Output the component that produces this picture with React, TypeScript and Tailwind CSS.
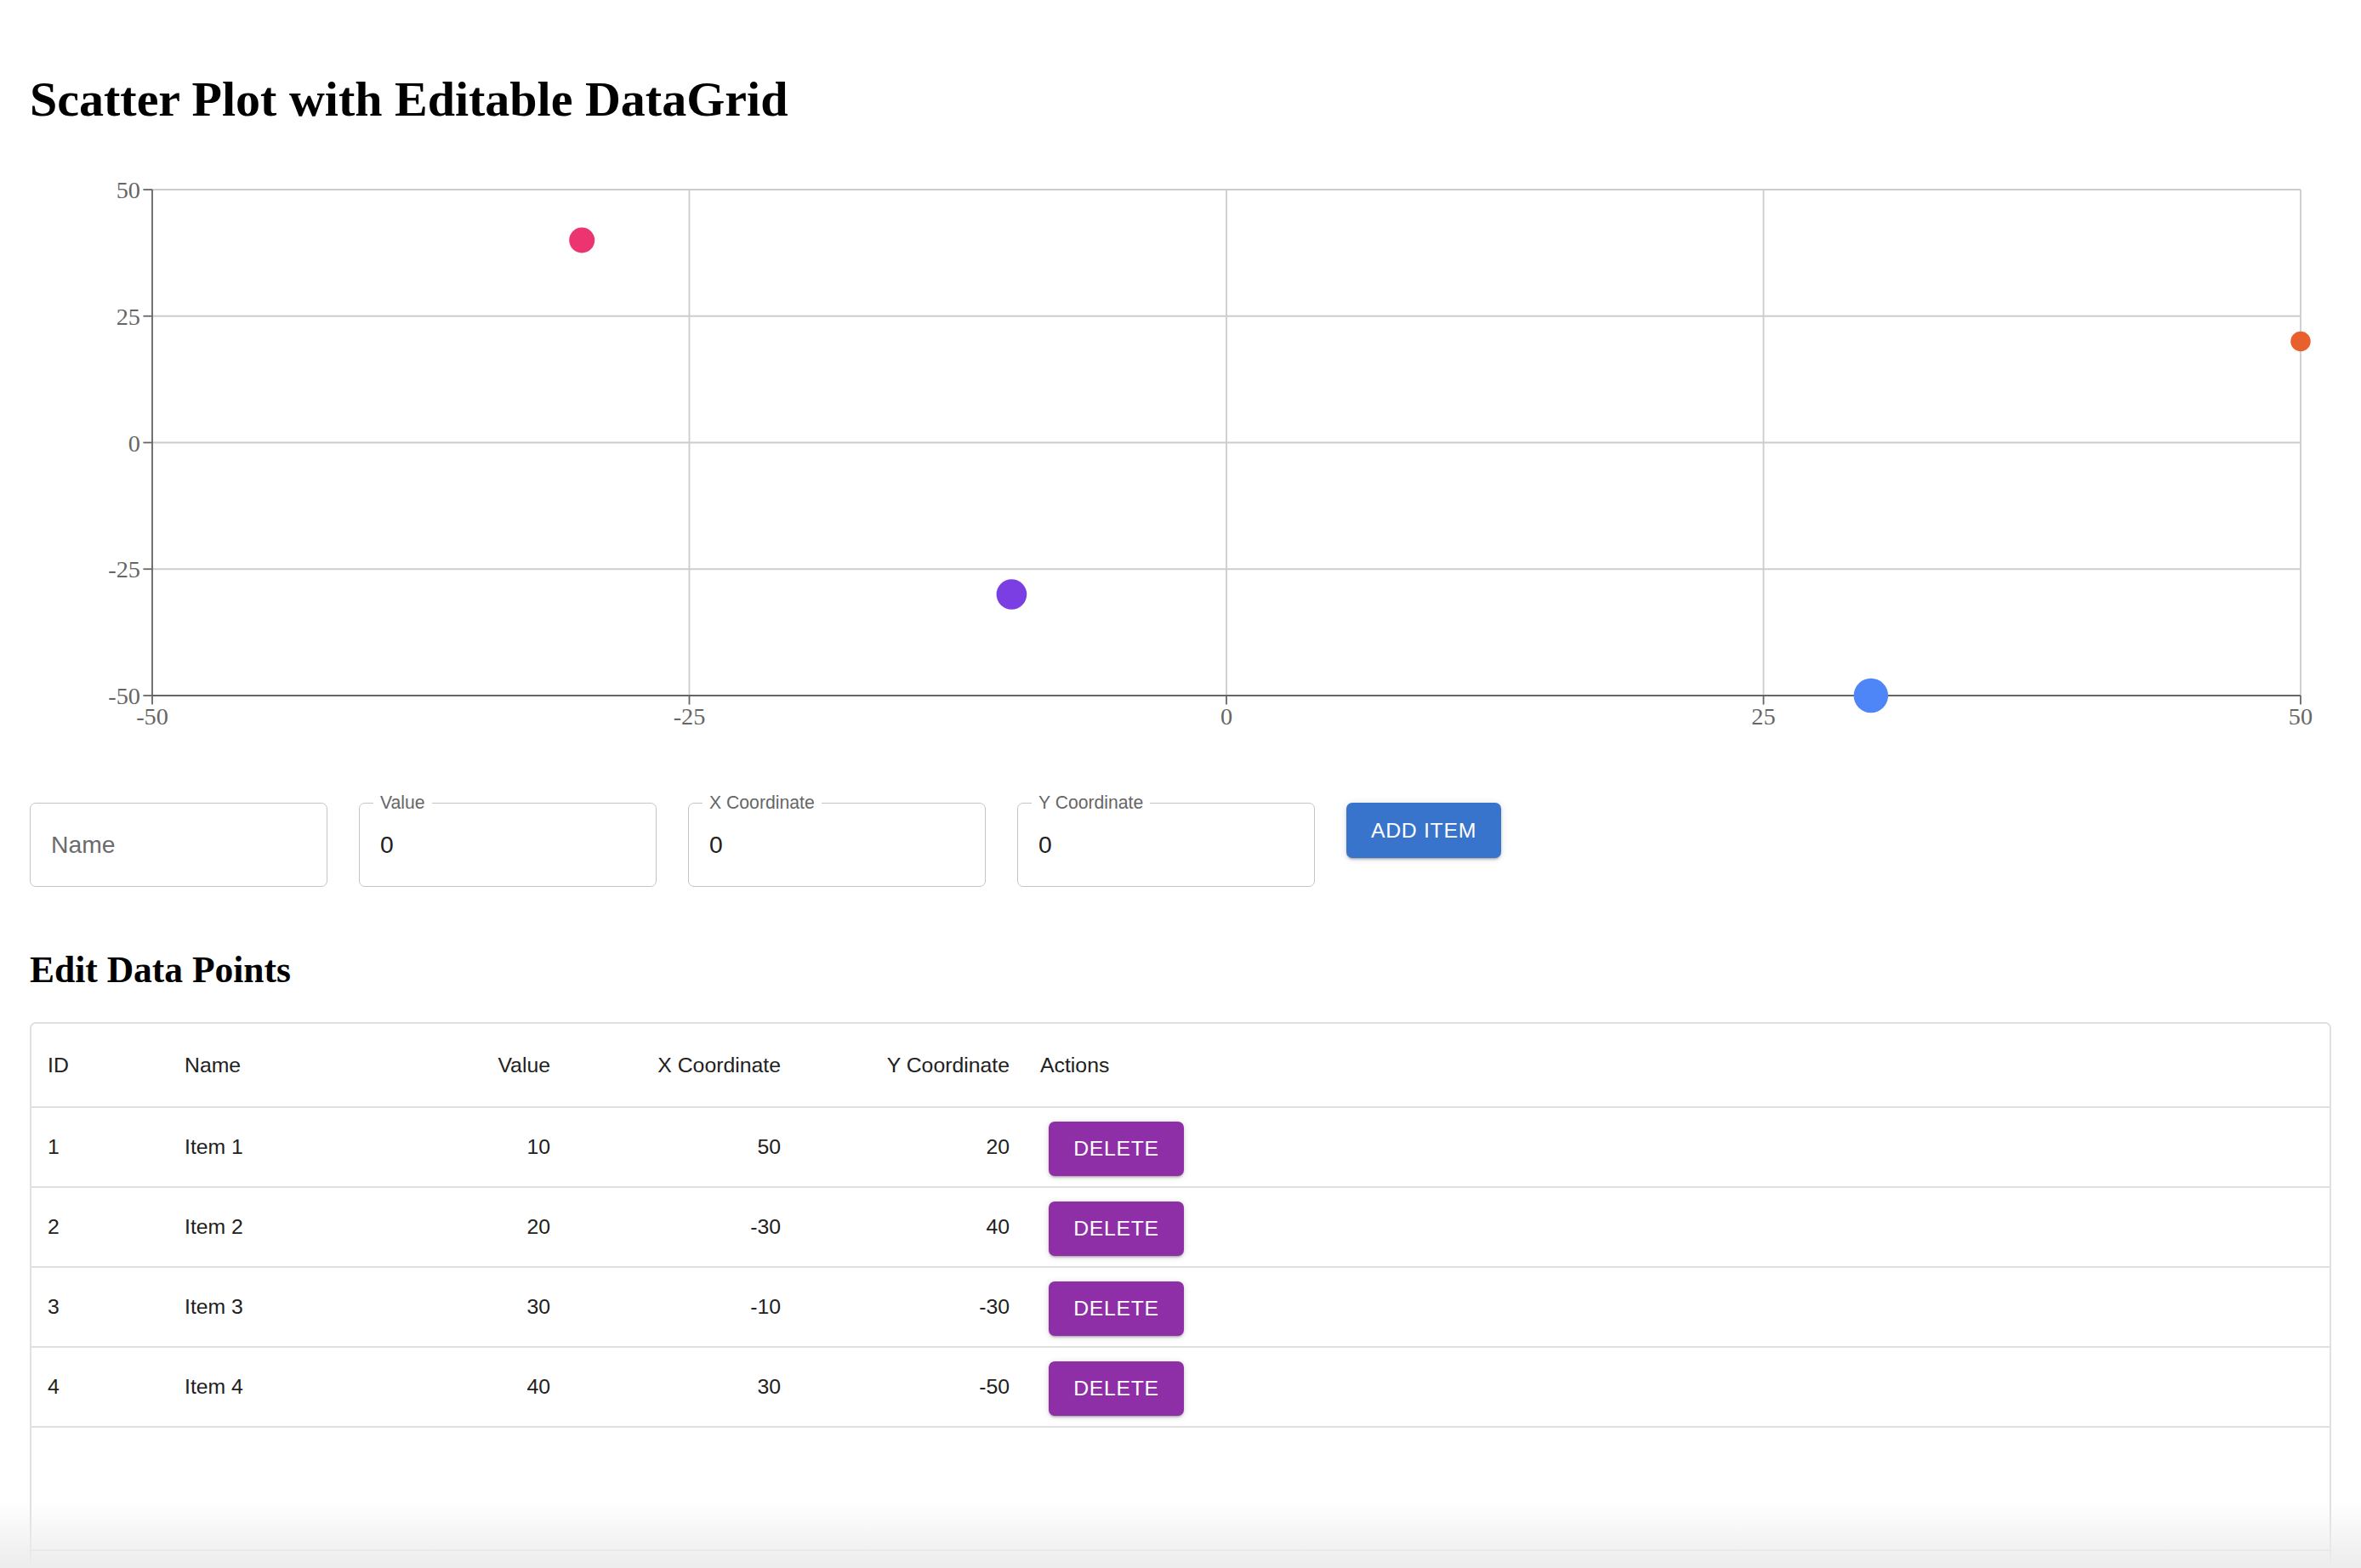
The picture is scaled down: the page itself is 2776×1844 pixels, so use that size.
import React from 'react';

type Point = { id: number; name: string; value: number; x: number; y: number; color: string; d: number };

const points: Point[] = [
  { id: 1, name: 'Item 1', value: 10, x: 50, y: 20, color: '#e8612c', d: 23.5 },
  { id: 2, name: 'Item 2', value: 20, x: -30, y: 40, color: '#ec3470', d: 30 },
  { id: 3, name: 'Item 3', value: 30, x: -10, y: -30, color: '#7a3ee3', d: 35.7 },
  { id: 4, name: 'Item 4', value: 40, x: 30, y: -50, color: '#4f86f7', d: 40.5 },
];

const ticks = [-50, -25, 0, 25, 50];

// plot box inside the svg (svg starts at page x=35, y=188)
const L = 144, R = 2670, T = 35, B = 630;
const sx = (v: number) => L + ((v + 50) / 100) * (R - L);
const sy = (v: number) => T + ((50 - v) / 100) * (B - T);

function Chart() {
  return (
    <svg width="2706" height="680" className="block mt-[39px]">
      {ticks.map(t => (
        <line key={'h' + t} x1={L} x2={R} y1={sy(t)} y2={sy(t)} stroke="#cccccc" strokeWidth={1.8} />
      ))}
      {ticks.map(t => (
        <line key={'v' + t} x1={sx(t)} x2={sx(t)} y1={T} y2={B} stroke="#cccccc" strokeWidth={1.8} />
      ))}

      {/* y axis */}
      <line x1={L} x2={L} y1={T} y2={B} stroke="#666" strokeWidth={1.8} />
      {ticks.map(t => (
        <g key={'yt' + t}>
          <line x1={L - 10.6} x2={L} y1={sy(t)} y2={sy(t)} stroke="#666" strokeWidth={1.8} />
          <text x={L - 14} y={sy(t) + 10} textAnchor="end" fill="#666" fontSize={28.3} fontFamily="'Liberation Serif', serif">{t}</text>
        </g>
      ))}

      {/* x axis */}
      <line x1={L} x2={R} y1={B} y2={B} stroke="#666" strokeWidth={1.8} />
      {ticks.map(t => (
        <g key={'xt' + t}>
          <line x1={sx(t)} x2={sx(t)} y1={B} y2={B + 10.6} stroke="#666" strokeWidth={1.8} />
          <text x={sx(t)} y={B + 34} textAnchor="middle" fill="#666" fontSize={28.3} fontFamily="'Liberation Serif', serif">{t}</text>
        </g>
      ))}

      {points.map(p => (
        <circle key={p.id} cx={sx(p.x)} cy={sy(p.y)} r={p.d / 2} fill={p.color} />
      ))}
    </svg>
  );
}

function Field({ label, value }: { label?: string; value?: string }) {
  return (
    <div className="relative w-[350px] h-[99px] shrink-0 rounded-[7px] border-[1.8px] border-[#c4c4c4] flex items-center px-[24px]">
      {label && (
        <span className="absolute left-[16px] top-[-13px] bg-white px-[8px] text-[21.2px] leading-[24px] text-[#666666]">{label}</span>
      )}
      {value !== undefined ? (
        <span className="text-[28.3px] text-[#212121]">{value}</span>
      ) : (
        <span className="text-[28.3px] text-[#6b6b6b]">Name</span>
      )}
    </div>
  );
}

const btnShadow = 'shadow-[0_3px_2px_-2px_rgba(0,0,0,0.2),0_2px_3px_0_rgba(0,0,0,0.14),0_1px_8px_0_rgba(0,0,0,0.12)]';

export default function App() {
  return (
    <div className="relative h-[1844px] overflow-hidden bg-white px-[35px] font-['Liberation_Sans',Arial,sans-serif]">
      <h1 className="pt-[85px] text-[58px] leading-[64px] font-bold font-['Liberation_Serif',serif] text-black">
        Scatter Plot with Editable DataGrid
      </h1>

      <Chart />

      <div className="flex gap-[37px] mt-[76px] items-start">
        <Field />
        <Field label="Value" value="0" />
        <Field label="X Coordinate" value="0" />
        <Field label="Y Coordinate" value="0" />
        <button className={`w-[182px] h-[65px] rounded-[7px] bg-[#3874cb] text-white text-[24.8px] font-medium tracking-[0.7px] uppercase ${btnShadow}`}>
          Add Item
        </button>
      </div>

      <h2 className="mt-[73px] text-[43.5px] leading-[48px] font-bold font-['Liberation_Serif',serif] text-black">
        Edit Data Points
      </h2>

      <div className="mt-[38px] border-2 border-[#e0e0e0] rounded-[7px] text-[24.8px] text-[#212121]">
        <div className="flex h-[99px] items-center border-b-2 border-[#e0e0e0] font-medium">
          <div className="w-[162px] pl-[19px]">ID</div>
          <div className="w-[271px] px-[18px]">Name</div>
          <div className="w-[195px] px-[18px] text-right">Value</div>
          <div className="w-[271px] px-[18px] text-right">X Coordinate</div>
          <div className="w-[269px] px-[18px] text-right">Y Coordinate</div>
          <div className="flex-1 px-[18px]">Actions</div>
        </div>
        {points.map(p => (
          <div key={p.id} className="flex h-[94px] items-center border-b-2 border-[#e0e0e0]">
            <div className="w-[162px] pl-[19px]">{p.id}</div>
            <div className="w-[271px] px-[18px]">{p.name}</div>
            <div className="w-[195px] px-[18px] text-right">{p.value}</div>
            <div className="w-[271px] px-[18px] text-right">{p.x}</div>
            <div className="w-[269px] px-[18px] text-right">{p.y}</div>
            <div className="flex-1 px-[18px]">
              <button className={`ml-[10px] mt-[3px] w-[159px] h-[64px] rounded-[7px] bg-[#8f2fa7] text-white text-[24.8px] font-medium tracking-[0.7px] uppercase ${btnShadow}`}>
                Delete
              </button>
            </div>
          </div>
        ))}
        <div className="h-[143px]" />
        <div className="h-[92px] border-t-2 border-[#e0e0e0]" />
      </div>

      <div className="pointer-events-none fixed inset-x-0 bottom-0 h-[80px] bg-gradient-to-b from-white/0 to-[#ececec]" />
    </div>
  );
}
